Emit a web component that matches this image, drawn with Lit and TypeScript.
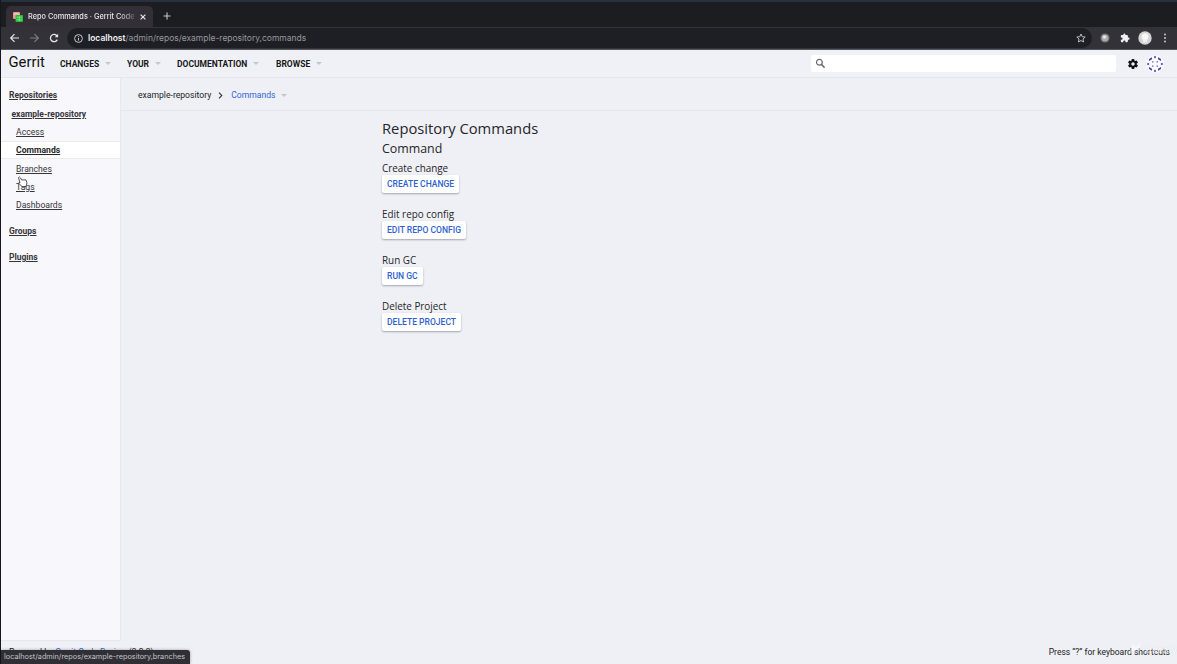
import { LitElement, html, css, svg } from "lit";
import { customElement } from "lit/decorators.js";

const caret = html`<i class="caret"></i>`;

// Solid marks of the generated avatar, in an 18 unit box.
const avatarMarks = [
  "M9 .8l1.200 1.300L9 3.400 7.800 2.100z", "M9 14.600l1.200 1.300L9 17.200l-1.200-1.300z",
  "M.8 9l1.300-1.200L3.400 9l-1.300 1.200z", "M14.600 9l1.300-1.200L17.200 9l-1.300 1.200z",
  "M3 6V4l3-1.700v2z", "M15 6V4l-3-1.700v2z",
  "M3 12v2l3 1.700v-2z", "M15 12v2l-3 1.700v-2z",
  "M6.200 6.200h1.200v1.200H6.200z", "M10.600 6.200h1.200v1.200h-1.200z", "M6.200 10.600h1.200v1.200H6.200z", "M10.600 10.600h1.200v1.200h-1.200z",
];

@customElement("app-root")
export class AppRoot extends LitElement {
  static styles = css`
    :host { display: block; width: 1177px; height: 664px; overflow: hidden; position: relative;
      font: 8.5px/12px Roboto, sans-serif; color: #222226; background: #eef0f5; }
    * { box-sizing: border-box; }
    svg { display: block; flex: none; }
    a, span, button, h1, h2, h3 { white-space: nowrap; }
    .page { display: flex; flex-direction: column; height: 664px; border-left: 1px solid #16171c; }
    .tabs { display: flex; height: 27px; background: #1c1d21; border-top: 2px solid #27303f; padding: 4px 0 0 5px; }
    .tab { display: flex; align-items: center; width: 147px; height: 21px; background: #323036;
      border-radius: 5px 5px 0 0; padding: 0 6px 0 7px; color: #e6e6e9; }
    .tab-title { width: 106px; margin-left: 5px; overflow: hidden; font: 500 7.35px/12px Inter, sans-serif;
      mask-image: linear-gradient(90deg, #000 86%, rgba(0, 0, 0, .25)); }
    .close { margin-left: 6px; }
    .plus { margin: 6px 0 0 10px; }
    .toolbar { display: flex; align-items: center; height: 23px; background: #343239; border-bottom: 1px solid #57565e; padding-left: 8px; }
    .omni { display: flex; align-items: center; margin-left: 7px; width: 1025px; height: 20px; border-radius: 10px;
      background: #1e1f24; color: #97989e; padding: 0 6px 0 7px; font: 8.48px/12px Inter, sans-serif; }
    .omni span { margin-left: 5px; flex: 1; }
    .omni b { color: #f0f0f2; font-weight: 600; }
    .gap { margin-left: 9px; }
    .header { display: flex; align-items: center; height: 28px; border-bottom: 1px solid #e6e7eb; padding-left: 7.5px; background: #f0f1f6; }
    .brand { font: 14.8px/20px Roboto, sans-serif; color: #111; width: 51.5px; margin-top: -3px; }
    .menu { display: flex; align-items: center; font-weight: 700; color: #18181b; }
    .caret { width: 0; height: 0; border: 3px solid transparent; border-top-color: #c5c6ca; border-bottom: 0; margin-left: 5.5px; flex: none; }
    .search { width: 305px; height: 17px; background: #fff; border-radius: 2px; margin-left: auto; padding: 3px 4px; }
    .gear { margin-left: 11px; }
    .avatar { margin: 0 13px 0 7px; }
    .body { display: flex; flex: 1; min-height: 0; }
    .side { width: 120px; height: 563px; background: #f8f7fc; border-right: 1px solid #e7e8ec; border-bottom: 1px solid #e7e8ec;
      display: flex; flex-direction: column; padding-top: 8px; }
    .side a { display: flex; align-items: center; height: 18.35px; text-decoration: underline; padding-left: 15px; color: #36363a;
      border: solid transparent; border-width: 1px 0; font-size: 8.65px; }
    .side a.top { padding-left: 8px; font-weight: 700; font-size: 8.5px; }
    .side a.repo { padding-left: 10.5px; font-weight: 700; font-size: 8.5px; }
    .side a.on { background: #fff; border-color: #ebebef; font-weight: 700; color: #28282c; }
    .side a.sep { margin-top: 7.5px; }
    .main { flex: 1; display: flex; flex-direction: column; }
    .crumbs { display: flex; align-items: center; height: 33px; border-bottom: 1px solid #e6e7eb; padding: 2px 0 0 17px; font-size: 8.6px; }
    .crumbs .link { color: #3265d2; margin-left: 8px; }
    .content { flex: 1; padding: 7px 0 0 261px; font-family: "Open Sans", sans-serif; }
    h1, h2, h3 { margin: 0; font-weight: 400; color: #26262a; }
    h1 { font-size: 14.75px; line-height: 21px; }
    h2 { font-size: 12.4px; line-height: 20px; }
    h3 { font-size: 9.9px; line-height: 16px; padding-top: 1px; height: 16px; }
    .cmd { height: 46px; }
    button { display: block; height: 18px; border: 0; border-radius: 2px; background: #fff; color: #3060cf; padding: 0 5px;
      font: 500 8.55px/18px Roboto, sans-serif; box-shadow: 0 1px 2px rgba(40, 42, 50, .38); }
    .footer { display: flex; justify-content: space-between; align-items: center; position: absolute; left: 9px; right: 7px; bottom: 6px; height: 12px; color: #222; }
    .footer a { color: #3265d2; }
    .status { position: absolute; left: 1px; bottom: 0; width: 189px; height: 14px; background: #302f35; color: #c4c4c9;
      border-radius: 0 3px 0 0; padding-left: 3px; font: 7.3px/13px Inter, sans-serif; box-shadow: 0 0 3px rgba(0, 0, 0, .35); white-space: nowrap; }
    .cursor { position: absolute; left: 17px; top: 176px; }
    .mark { position: absolute; left: 1128px; top: 642px; display: flex; align-items: center; gap: 3px; opacity: .5; color: #fff;
      font: 700 9px/16px "Open Sans", sans-serif; text-shadow: 0 0 1px #aaa; }
  `;

  private cmd(label: string, action: string) {
    return html`<div class="cmd"><h3>${label}</h3><button>${action}</button></div>`;
  }

  render() {
    return html`
      <div class="page">
        <div class="tabs">
          <div class="tab">
            <svg width="10" height="10" viewBox="0 0 10 10"><rect width="7" height="7" rx="1" fill="#ee9a94"/><path d="M1 2h5" stroke="#fbd5d1"/><rect x="2.500" y="3" width="7.500" height="7" rx="1" fill="#27bd3d"/><path d="M3.500 5.200h5.500M3.500 7.800h5.500M6.300 4v5" stroke="#8fe992" stroke-width=".8"/></svg>
            <span class="tab-title">Repo Commands · Gerrit Code</span>
            <svg class="close" width="6" height="6" viewBox="0 0 6 6"><path d="M.6.6l4.800 4.800M5.400.6L.6 5.400" stroke="#e8e8ea" stroke-width="1.200"/></svg>
          </div>
          <svg class="plus" width="8" height="8" viewBox="0 0 8 8"><path d="M4 .5v7M.5 4h7" stroke="#c8c8cc" stroke-width="1.100"/></svg>
        </div>
        <div class="toolbar">
          <svg width="11" height="10" viewBox="0 0 11 10" fill="none" stroke="#e6e6ea" stroke-width="1.200"><path d="M10 5H2M5.500 1.200L1.700 5l3.800 3.800"/></svg>
          <svg class="gap" width="11" height="10" viewBox="0 0 11 10" fill="none" stroke="#7b7a81" stroke-width="1.200"><path d="M1 5h8M5.500 1.200L9.300 5 5.500 8.800"/></svg>
          <svg class="gap" width="11" height="10" viewBox="0 0 11 10" fill="none" stroke="#e6e6ea" stroke-width="1.300"><path d="M8.300 6.600A3.600 3.600 0 1 1 7.600 2.500L8.800 3.600"/><path d="M9.100.8v3.400H5.800z" fill="#e6e6ea" stroke="none"/></svg>
          <div class="omni">
            <svg width="9" height="9" viewBox="0 0 9 9" fill="none" stroke="#d8d8dc" stroke-width=".9"><circle cx="4.500" cy="4.500" r="3.900"/><path d="M4.500 4v2.600M4.500 2.200v1"/></svg>
            <span><b>localhost</b>/admin/repos/example-repository,commands</span>
            <svg width="10" height="10" viewBox="0 0 10 10"><path d="M5 1l1.200 2.700 3 .3L7 6l.6 3L5 7.500 2.400 9 3 6 .8 4l3-.3z" fill="none" stroke="#c9c9ce" stroke-width=".9"/></svg>
          </div>
          <svg style="margin-left:8px" width="10" height="10" viewBox="0 0 10 10"><circle cx="5" cy="5" r="4.500" fill="#77787b"/><circle cx="5" cy="5" r="3.300" fill="#a9aaa9"/><circle cx="4.500" cy="4" r="1.800" fill="#e4e5e3"/></svg>
          <svg style="margin-left:10px" width="10" height="10" viewBox="0 0 24 24"><path d="M20.500 11H19V7c0-1.100-.9-2-2-2h-4V3.500a2.500 2.500 0 0 0-5 0V5H4c-1.100 0-2 .9-2 2v3.800h1.500a2.700 2.700 0 0 1 0 5.400H2V20c0 1.100.9 2 2 2h3.800v-1.500a2.700 2.700 0 0 1 5.400 0V22H17c1.100 0 2-.9 2-2v-4h1.500a2.500 2.500 0 0 0 0-5z" fill="#f0f0f3"/></svg>
          <svg style="margin-left:8px" width="14" height="14" viewBox="0 0 14 14"><circle cx="7" cy="7" r="6.700" fill="#d3d3d5"/><circle cx="7" cy="5.800" r="3.500" fill="#f7f7f8"/><path d="M5 8h4v3.500H5z" fill="#f0f0f1"/></svg>
          <svg style="margin-left:10.5px" width="4" height="10" viewBox="0 0 4 10" fill="#d6d6da"><circle cx="2" cy="1.500" r=".9"/><circle cx="2" cy="5" r=".9"/><circle cx="2" cy="8.500" r=".9"/></svg>
        </div>
        <div class="header">
          <span class="brand">Gerrit</span>
          <span class="menu" style="width:67px">CHANGES${caret}</span>
          <span class="menu" style="width:50px">YOUR${caret}</span>
          <span class="menu" style="width:99px">DOCUMENTATION${caret}</span>
          <span class="menu">BROWSE${caret}</span>
          <div class="search"><svg width="11" height="11" viewBox="0 0 11 11" fill="none" stroke="#66676b"><circle cx="4.400" cy="4.200" r="2.900" stroke-width="1.200"/><path d="M6.500 6.500l3.100 3.100" stroke-width="1.500"/></svg></div>
          <svg class="gear" width="12" height="12" viewBox="0 0 24 24"><path d="M19.430 12.980c.04-.32.07-.64.07-.98s-.03-.66-.07-.98l2.110-1.650c.19-.15.24-.42.12-.64l-2-3.460c-.12-.22-.39-.3-.61-.22l-2.490 1c-.52-.4-1.080-.73-1.690-.98l-.38-2.650A.488.488 0 0 0 14 2h-4c-.25 0-.46.18-.49.42l-.38 2.650c-.61.25-1.170.59-1.690.98l-2.490-1c-.23-.09-.49 0-.61.22l-2 3.460c-.13.22-.07.49.12.64l2.110 1.650c-.04.32-.07.65-.07.98s.03.66.07.98l-2.110 1.650c-.19.15-.24.42-.12.64l2 3.460c.12.22.39.3.61.22l2.490-1c.52.4 1.080.73 1.690.98l.38 2.650c.03.24.24.42.49.42h4c.25 0 .46-.18.49-.42l.38-2.650c.61-.25 1.170-.59 1.690-.98l2.490 1c.23.09.49 0 .61-.22l2-3.460c.12-.22.07-.49-.12-.64l-2.110-1.650zM12 15.500a3.500 3.500 0 1 1 0-7 3.500 3.500 0 0 1 0 7z" fill="#101012"/></svg>
          <svg class="avatar" width="18" height="18" viewBox="0 0 18 18"><circle cx="9" cy="9" r="9" fill="#fafafd"/>${avatarMarks.map((d) => svg`<path d=${d} fill="#4a3bb0"/>`)}</svg>
        </div>
        <div class="body">
          <nav class="side">
            <a class="top">Repositories</a>
            <a class="repo">example-repository</a>
            <a>Access</a>
            <a class="on">Commands</a>
            <a>Branches</a>
            <a>Tags</a>
            <a>Dashboards</a>
            <a class="top sep">Groups</a>
            <a class="top sep">Plugins</a>
          </nav>
          <div class="main">
            <div class="crumbs">
              <span>example-repository</span>
              <svg style="margin-left:7px" width="5" height="7" viewBox="0 0 5 7"><path d="M1 .7l2.800 2.800L1 6.300" fill="none" stroke="#333" stroke-width="1.100"/></svg>
              <span class="link">Commands</span>${caret}
            </div>
            <div class="content">
              <h1>Repository Commands</h1>
              <h2>Command</h2>
              ${this.cmd("Create change", "CREATE CHANGE")}
              ${this.cmd("Edit repo config", "EDIT REPO CONFIG")}
              ${this.cmd("Run GC", "RUN GC")}
              ${this.cmd("Delete Project", "DELETE PROJECT")}
            </div>
          </div>
        </div>
      </div>
      <div class="footer"><span>Powered by <a>Gerrit Code Review</a> (3.2.3)</span><span>Press “?” for keyboard shortcuts</span></div>
      <div class="mark"><svg width="14" height="14" viewBox="0 0 14 14" fill="none" stroke="#fff" stroke-width="2"><path d="M2 10l4-8v6l5-6v6"/></svg><span>Udemy</span></div>
      <div class="status">localhost/admin/repos/example-repository,branches</div>
      <svg class="cursor" width="11" height="12" viewBox="0 0 11 12"><path d="M3 7L1.500 1.600Q2.600.2 3.600 2l1 2 4.200-.2 1.200 3-1 3.700H5L1.500 7.200Q1.800 6 3 7z" fill="#fff" stroke="#414146" stroke-width=".9"/></svg>
    `;
  }
}
